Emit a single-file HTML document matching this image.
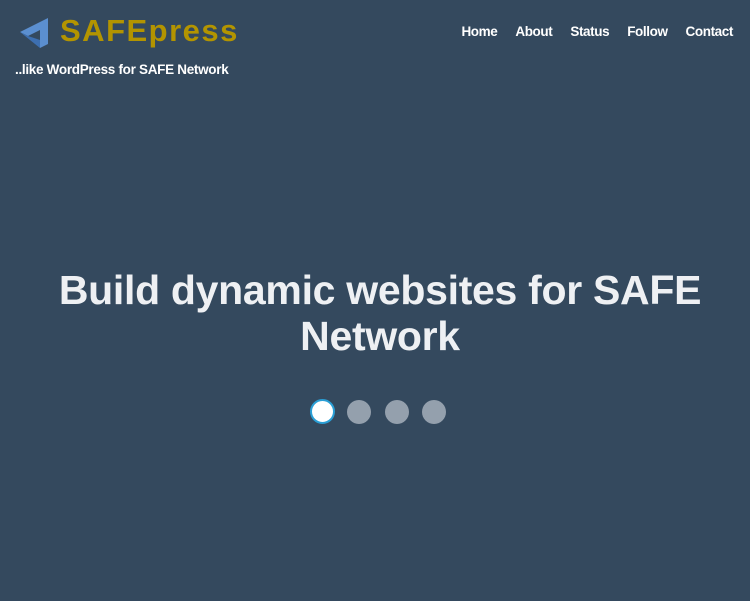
<!DOCTYPE html><html><head><style>
body{margin:0;width:750px;height:601px;background:#34495e;font-family:"Liberation Sans",sans-serif;position:relative;overflow:hidden}
.logo{position:absolute;left:60px;top:13px;font-size:31px;font-weight:bold;color:#b39400;letter-spacing:1.5px}
.tag{position:absolute;left:15px;top:62px;font-size:13.5px;font-weight:bold;color:#fff;letter-spacing:-0.3px}
nav{position:absolute;top:24px;right:17px;font-size:13.5px;font-weight:bold;color:#fff;letter-spacing:-0.4px}
nav span{margin-left:18px}
h1{position:absolute;top:267px;left:0;width:760px;text-align:center;margin:0;font-size:41px;line-height:46px;color:#eef0f3;font-weight:bold;letter-spacing:-0.3px}
.d{position:absolute;top:400px;width:24px;height:24px;border-radius:50%;background:#94a0ad}
</style></head><body>
<svg style="position:absolute;left:18px;top:16px" width="32" height="32" viewBox="0 0 32 32"><path d="M2 16 L30 2 L30 28 L22 32 L22 14 L10 20 Z" fill="#5b8fd0"/><path d="M2 16 L22 32 L22 24 L10 20Z" fill="#3d6fb0"/></svg>
<div class="logo">SAFEpress</div>
<div class="tag">..like WordPress for SAFE Network</div>
<nav><span>Home</span><span>About</span><span>Status</span><span>Follow</span><span>Contact</span></nav>
<h1>Build dynamic websites for SAFE<br>Network</h1>
<div class="d" style="left:310px;background:#fff;border:2px solid #2a9fd6;width:21px;height:21px;top:399px"></div>
<div class="d" style="left:347px"></div>
<div class="d" style="left:385px"></div>
<div class="d" style="left:422px"></div>
</body></html>
